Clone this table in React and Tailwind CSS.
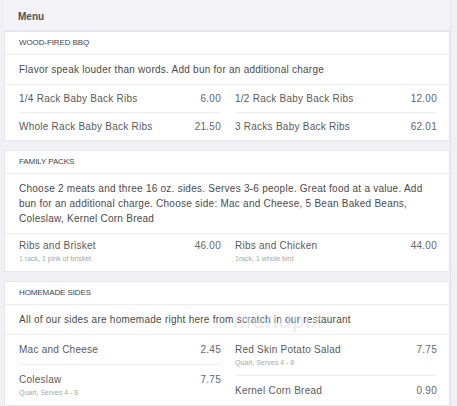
const SECTIONS = [
  {
    title: 'WOOD-FIRED BBQ',
    description: 'Flavor speak louder than words. Add bun for an additional charge',
    rowPad: 'py-[6px]',
    columns: [
      [
        { name: '1/4 Rack Baby Back Ribs', price: '6.00' },
        { name: 'Whole Rack Baby Back Ribs', price: '21.50' },
      ],
      [
        { name: '1/2 Rack Baby Back Ribs', price: '12.00' },
        { name: '3 Racks Baby Back Ribs', price: '62.01' },
      ],
    ],
  },
  {
    title: 'FAMILY PACKS',
    description:
      'Choose 2 meats and three 16 oz. sides. Serves 3-6 people. Great food at a value. Add bun for an additional charge. Choose side: Mac and Cheese, 5 Bean Baked Beans, Coleslaw, Kernel Corn Bread',
    rowPad: 'pt-[4px] pb-[7px]',
    columns: [
      [{ name: 'Ribs and Brisket', price: '46.00', note: '1 rack, 1 pink of brisket' }],
      [{ name: 'Ribs and Chicken', price: '44.00', note: '1rack, 1 whole bird' }],
    ],
  },
  {
    title: 'HOMEMADE SIDES',
    description: 'All of our sides are homemade right here from scratch in our restaurant',
    rowPad: 'py-[7px]',
    columns: [
      [
        { name: 'Mac and Cheese', price: '2.45' },
        { name: 'Coleslaw', price: '7.75', note: 'Quart, Serves 4 - 8' },
      ],
      [
        { name: 'Red Skin Potato Salad', price: '7.75', note: 'Quart, Serves 4 - 8' },
        { name: 'Kernel Corn Bread', price: '0.90' },
      ],
    ],
    watermark: true,
  },
];

function Item({ item, last, pad }) {
  return (
    <div className={pad + ' ' + (last ? '' : 'border-b border-[#ededf1]')}>
      <div className="flex items-center justify-between text-[10px] leading-[15px] tracking-[0.25px]">
        <span className="text-[#5a5a5a]">{item.name}</span>
        <span className="text-[#666]">{item.price}</span>
      </div>
      {item.note && (
        <div className="text-[7px] leading-[11px] text-[#a8a8a8]">{item.note}</div>
      )}
    </div>
  );
}

function Section({ section }) {
  return (
    <section className="relative border border-[#e6e6ec] bg-white">
      <div className="flex h-[23px] items-center border-b border-[#ededf1] px-[14px] text-[8px] tracking-[-0.1px] text-[#444]">
        {section.title}
      </div>
      <div className="border-b border-[#ededf1] px-[14px] py-[7px] text-[10px] leading-[15px] tracking-[0.25px] text-[#4a4a4a]">
        {section.description}
      </div>
      <div className="grid grid-cols-2 gap-x-[14px] pl-[14px] pr-[12px]">
        {section.columns.map((col, i) => (
          <div key={i}>
            {col.map((item, j) => (
              <Item key={item.name} item={item} pad={section.rowPad} last={j === col.length - 1} />
            ))}
          </div>
        ))}
      </div>
      {section.watermark && (
        <div className="pointer-events-none absolute left-[228px] top-[28px] text-[22px] leading-none tracking-[1px] text-[#e2e2e2] opacity-60">
          menupix
        </div>
      )}
    </section>
  );
}

export default function App() {
  return (
    <div className="h-[406px] w-[457px] overflow-hidden bg-[#f1f1f5] pl-[4px] pr-[6px] font-['Liberation_Sans',Arial,sans-serif]">
      <div className="border-r border-[#e3e3e9]">
        <div className="flex h-[31px] items-center border-b border-[#e8e8ee] bg-[#f4f4f8] px-[14px] pt-[3px] text-[10px] font-bold text-[#505050]">
          Menu
        </div>
        <div className="flex flex-col gap-[9px]">
          {SECTIONS.map((s) => (
            <Section key={s.title} section={s} />
          ))}
        </div>
      </div>
    </div>
  );
}
